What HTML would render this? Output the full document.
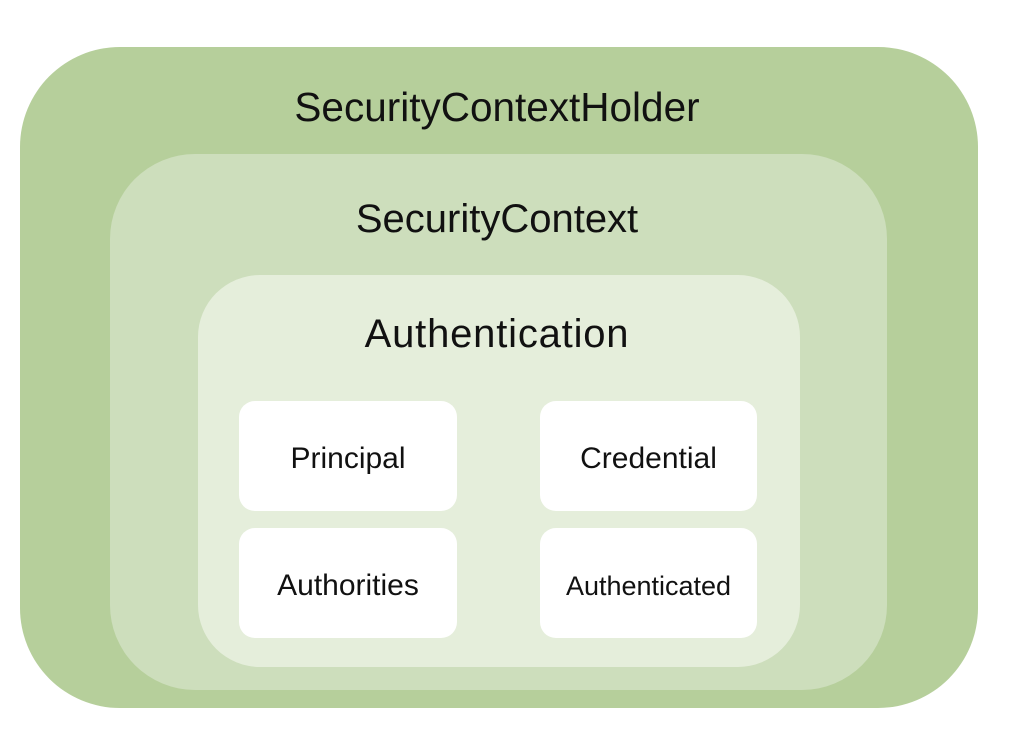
<!DOCTYPE html>
<html><head><style>
body{margin:0;width:1018px;height:754px;background:#fff;position:relative;overflow:hidden;font-family:"Liberation Sans","DejaVu Sans",sans-serif;color:#111}
.b{position:absolute}
.t{position:absolute;left:0;text-align:center}
.w{position:absolute;background:#fff;border-radius:16px;display:flex;align-items:center;justify-content:center;font-size:30px;padding-top:6px;box-sizing:border-box}
</style></head><body>
<div class="b" style="left:20px;top:47px;width:958px;height:661px;background:#b6cf9b;border-radius:100px"></div>
<div class="b" style="left:110px;top:154px;width:777px;height:536px;background:#cddebc;border-radius:85px"></div>
<div class="b" style="left:198px;top:275px;width:602px;height:392px;background:#e5eedb;border-radius:62px"></div>
<div class="t" style="top:84px;font-size:40.5px;width:994px">SecurityContextHolder</div>
<div class="t" style="top:197px;font-size:40px;width:994px">SecurityContext</div>
<div class="t" style="top:312px;font-size:40px;width:994px;letter-spacing:0.8px">Authentication</div>
<div class="w" style="left:239px;top:401px;width:218px;height:110px">Principal</div>
<div class="w" style="left:540px;top:401px;width:217px;height:110px">Credential</div>
<div class="w" style="left:239px;top:528px;width:218px;height:110px">Authorities</div>
<div class="w" style="left:540px;top:528px;width:217px;height:110px;font-size:27px">Authenticated</div>
</body></html>
